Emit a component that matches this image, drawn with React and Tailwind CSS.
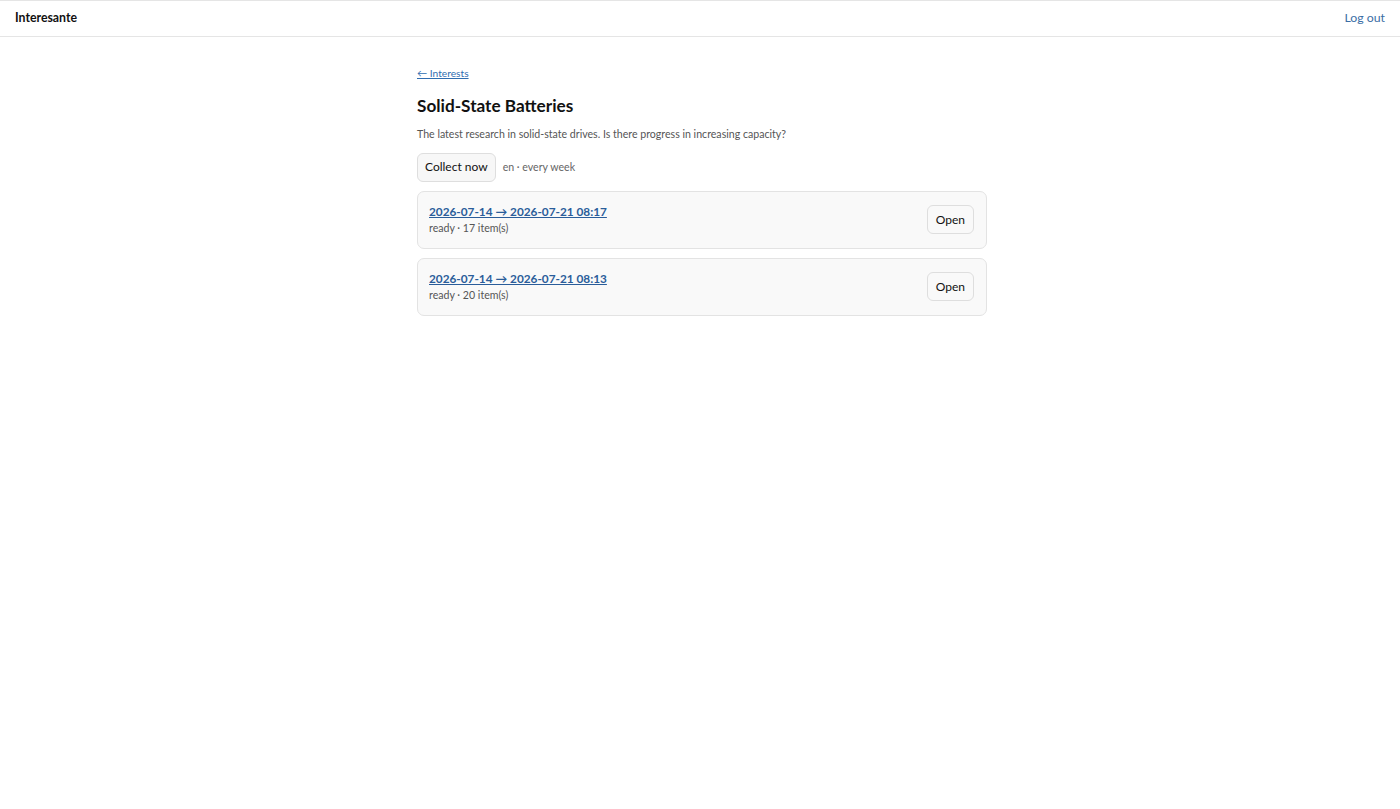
import React from 'react';

const runs = [
  { id: 1, label: '2026-07-14 → 2026-07-21 08:17', status: 'ready', count: 17 },
  { id: 2, label: '2026-07-14 → 2026-07-21 08:13', status: 'ready', count: 20 },
];

export default function App() {
  return (
    <div className="min-h-screen bg-white text-[#111] font-['Lato','Noto_Sans',sans-serif]">
      <header className="h-[37px] border-y border-[#e5e5e5] flex items-center justify-between px-[15px]">
        <span className="text-[12.3px] font-bold">Interesante</span>
        <a href="#" className="text-[12.3px] text-[#3b6ea5]">Log out</a>
      </header>

      <main className="w-[574px] mx-auto pl-[4px] pt-[22px]">
        <a href="#" className="text-[10.2px] text-[#2f6db0] underline">← Interests</a>
        <h1 className="mt-[11px] text-[17.2px] font-bold leading-[24px]">Solid-State Batteries</h1>
        <p className="mt-[9px] text-[10.6px] text-[#555]">
          The latest research in solid-state drives. Is there progress in increasing capacity?
        </p>

        <div className="mt-[10px] flex items-center gap-[7px]">
          <button className="h-[29px] px-[7px] text-[12px] bg-[#f7f7f7] border border-[#dedede] rounded-[6px]">
            Collect now
          </button>
          <span className="text-[10.6px] text-[#666] pt-[2px]">en · every week</span>
        </div>

        <div className="mt-[9px] flex flex-col gap-[9px]">
          {runs.map((r) => (
            <div
              key={r.id}
              className="h-[58px] flex items-center justify-between pl-[11px] pr-[12px] bg-[#f9f9f9] border border-[#e3e3e3] rounded-[7px]"
            >
              <div className="flex flex-col pt-[1px]">
                <a href="#" className="text-[11.8px] font-bold text-[#2a5d9a] underline leading-[17px]">
                  {r.label}
                </a>
                <span className="text-[10.6px] text-[#555] leading-[17px]">
                  {r.status} · {r.count} item(s)
                </span>
              </div>
              <button className="h-[29px] px-[8px] text-[12px] bg-[#f9f9f9] border border-[#dedede] rounded-[6px]">
                Open
              </button>
            </div>
          ))}
        </div>
      </main>
    </div>
  );
}
